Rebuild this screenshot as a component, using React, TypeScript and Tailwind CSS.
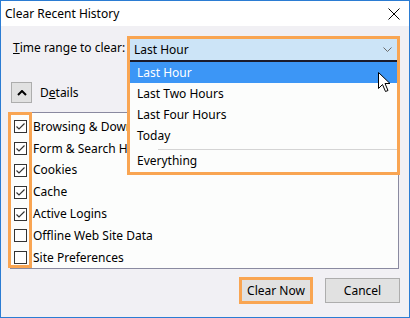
const items = [
  { label: "Browsing & Download History", checked: true },
  { label: "Form & Search History", checked: true },
  { label: "Cookies", checked: true },
  { label: "Cache", checked: true },
  { label: "Active Logins", checked: true },
  { label: "Offline Web Site Data", checked: false },
  { label: "Site Preferences", checked: false },
];

const ranges = ["Last Two Hours", "Last Four Hours", "Today"];

function CheckBox({ checked }: { checked: boolean }) {
  return (
    <div className="flex h-[13px] w-[13px] shrink-0 items-center justify-center border border-[#333333] bg-white">
      {checked && (
        <svg width="11" height="11" viewBox="0 0 11 11">
          <path d="M1.5 5.5 L4 8 L9.5 2.5" fill="none" stroke="#333333" strokeWidth="1.2" />
        </svg>
      )}
    </div>
  );
}

export default function App() {
  return (
    <div
      className="flex h-[318px] w-[410px] flex-col border border-[#2b7cd3] text-[12px] text-black"
      style={{ fontFamily: '"Noto Sans", "Open Sans", sans-serif' }}
    >
      <div className="flex h-[25px] items-center justify-between bg-white pl-[4px] pr-[9px]">
        <span>Clear Recent History</span>
        <svg width="12" height="12" viewBox="0 0 12 12">
          <path d="M0.5 0.5 L11.5 11.5 M11.5 0.5 L0.5 11.5" stroke="#000" strokeWidth="1" />
        </svg>
      </div>

      <div className="flex flex-1 flex-col bg-[#f1f0f4] pt-[13px]">
        <div className="flex h-[22px] items-start pl-[12px]">
          <span className="w-[117px] pt-[1px] leading-[16px]">
            <span className="underline">T</span>ime range to clear:
          </span>

          <div className="relative h-[22px] w-[267px]">
            <div className="absolute left-[-3px] top-[-3px] z-10 w-[273px] border-[3px] border-[#f9a552] bg-[#fcfdfc]">
              <div className="flex h-[23px] items-center justify-between border-b-2 border-[#1b1b2b] bg-[#cce4f7] pl-[4px] pr-[5px]">
                <span>Last Hour</span>
                <svg width="9" height="5" viewBox="0 0 9 5">
                  <path d="M0.5 0.5 L4.5 4.5 L8.5 0.5" fill="none" stroke="#6b6b6b" strokeWidth="1" />
                </svg>
              </div>
              <div className="relative">
                <div className="flex h-[21px] items-center bg-[#3c96f6] pl-[7px] text-white">
                  Last Hour
                </div>
                {ranges.map((r) => (
                  <div key={r} className="flex h-[21px] items-center pl-[7px]">
                    {r}
                  </div>
                ))}
                <div className="ml-[28px] mt-[3px] h-px bg-[#d4d4d4]" />
                <div className="flex h-[22px] items-center pl-[7px]">Everything</div>

                <svg
                  className="absolute left-[248px] top-[10px]"
                  width="13"
                  height="21"
                  viewBox="0 0 13 21"
                >
                  <path
                    d="M0.5 0.5 L0.5 16.5 L4.5 12.5 L7.5 19.5 L10 18.5 L7 11.5 L12 11.5 Z"
                    fill="#fff"
                    stroke="#000"
                    strokeWidth="1"
                  />
                </svg>
              </div>
            </div>
          </div>
        </div>

        <div className="mt-[21px] flex h-[21px] items-center pl-[10px]">
          <div className="flex h-[21px] w-[21px] items-center justify-center border border-[#adadad] bg-[#e1e1e1]">
            <svg width="10" height="6" viewBox="0 0 10 6">
              <path d="M1 5 L5 1 L9 5" fill="none" stroke="#000" strokeWidth="2" />
            </svg>
          </div>
          <span className="ml-[8px]">
            D<span className="underline">e</span>tails
          </span>
        </div>

        <div className="relative ml-[9px] mt-[9px] h-[157px] w-[389px] overflow-hidden border border-[#8a8aa0] bg-[#fcfdfc] pl-[3px] pt-[3px]">
          {items.map((it) => (
            <div key={it.label} className="flex h-[21.8px] items-center gap-[6px]">
              <CheckBox checked={it.checked} />
              <span className="whitespace-nowrap">{it.label}</span>
            </div>
          ))}
        </div>
        <div className="relative">
          <div className="absolute left-[7px] top-[-157px] h-[156px] w-[24px] border-[3px] border-[#f9a552]" />
        </div>

        <div className="mt-[8px] flex items-center justify-end gap-[12px] pr-[9px]">
          <div className="border-[3px] border-[#f9a552]">
            <div className="flex h-[21px] w-[68px] items-center justify-center bg-[#e1e1e1]">
              Clear Now
            </div>
          </div>
          <div className="flex h-[25px] w-[75px] items-center justify-center border border-[#adadad] bg-[#e1e1e1]">
            Cancel
          </div>
        </div>
      </div>
    </div>
  );
}
